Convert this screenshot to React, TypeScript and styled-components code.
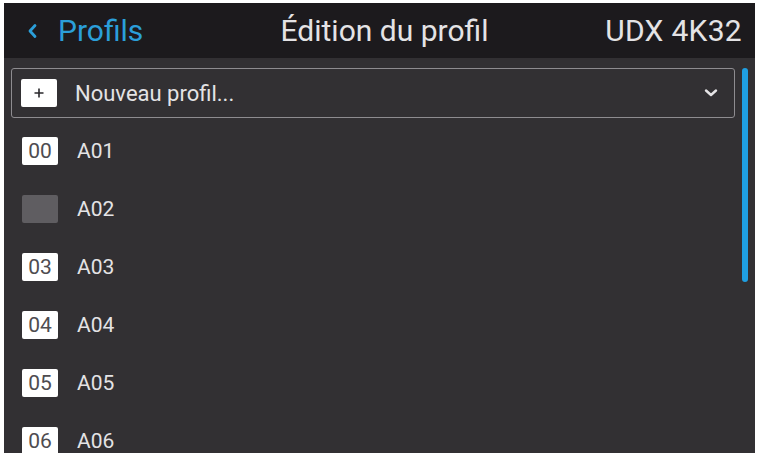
import React, { FC } from 'react';
import styled, { createGlobalStyle } from 'styled-components';

const colors = {
  page: '#ffffff',
  header: '#1c1a1d',
  content: '#323033',
  text: '#e4e3e5',
  blue: '#2b9fd9',
  border: '#8e8c90',
  badgeText: '#4e4c50',
  badgeEmpty: '#5f5d61',
  scroll: '#1f9fe2',
};

const GlobalStyle = createGlobalStyle`
  html, body {
    margin: 0;
    padding: 0;
    background: ${colors.page};
  }
  body {
    font-family: Roboto, "Liberation Sans", sans-serif;
  }
`;

const Screen = styled.div`
  margin: 3px 2px 0 4px;
  height: 450px;
  display: flex;
  flex-direction: column;
  background: ${colors.content};
  overflow: hidden;
`;

const Header = styled.header`
  height: 55px;
  flex: none;
  display: grid;
  grid-template-columns: 1fr auto 1fr;
  align-items: center;
  padding: 0 13px 0 23px;
  background: ${colors.header};
  font-size: 30px;
`;

const BackLink = styled.div`
  display: flex;
  align-items: center;
  gap: 20px;
  color: ${colors.blue};
`;

const Title = styled.div`
  color: ${colors.text};
`;

const Device = styled.div`
  justify-self: end;
  color: ${colors.text};
  letter-spacing: 0.3px;
`;

const Body = styled.div`
  position: relative;
  flex: 1;
  padding: 10px 20px 0 7px;
`;

const ScrollThumb = styled.div`
  position: absolute;
  top: 10px;
  right: 7px;
  width: 6px;
  height: 214px;
  border-radius: 3px;
  background: ${colors.scroll};
`;

const Dropdown = styled.div`
  height: 48px;
  display: flex;
  align-items: center;
  padding: 0 16px 0 9px;
  border: 1px solid ${colors.border};
  border-radius: 3px;
  color: ${colors.text};
  font-size: 22px;
`;

const DropdownLabel = styled.span`
  flex: 1;
  margin-left: 18px;
`;

const Row = styled.div`
  height: 58px;
  display: flex;
  align-items: center;
  padding-left: 11px;
  color: ${colors.text};
  font-size: 21px;
`;

const List = styled.div`
  margin-top: 4px;
`;

const RowLabel = styled.span`
  margin-left: 19px;
`;

const Badge = styled.div<{ $empty?: boolean }>`
  width: 36px;
  height: 28px;
  flex: none;
  display: flex;
  align-items: center;
  justify-content: center;
  border-radius: 2px;
  background: ${({ $empty }) => ($empty ? colors.badgeEmpty : '#ffffff')};
  color: ${colors.badgeText};
  font-size: 21px;
`;

const ChevronLeft: FC = () => (
  <svg width="11" height="16" viewBox="0 0 11 16" fill="none">
    <path d="M8 2.5 L3 8 L8 13.5" stroke={colors.blue} strokeWidth="2.8" strokeLinecap="round" strokeLinejoin="round" />
  </svg>
);

const ChevronDown: FC = () => (
  <svg width="14" height="10" viewBox="0 0 14 10" fill="none">
    <path d="M2 2.5 L7 7 L12 2.5" stroke={colors.text} strokeWidth="2.4" strokeLinecap="round" strokeLinejoin="round" />
  </svg>
);

const PlusIcon: FC = () => (
  <svg width="12" height="12" viewBox="0 0 12 12">
    <path d="M6 1.5 V10.5 M1.5 6 H10.5" stroke="#2a282c" strokeWidth="1.6" />
  </svg>
);

const profiles = [
  { code: '00', name: 'A01' },
  { code: '', name: 'A02' },
  { code: '03', name: 'A03' },
  { code: '04', name: 'A04' },
  { code: '05', name: 'A05' },
  { code: '06', name: 'A06' },
];

const App: FC = () => (
  <>
    <GlobalStyle />
    <Screen>
      <Header>
        <BackLink>
          <ChevronLeft />
          <span>Profils</span>
        </BackLink>
        <Title>Édition du profil</Title>
        <Device>UDX 4K32</Device>
      </Header>
      <Body>
        <Dropdown>
          <Badge>
            <PlusIcon />
          </Badge>
          <DropdownLabel>Nouveau profil...</DropdownLabel>
          <ChevronDown />
        </Dropdown>
        <List>
          {profiles.map((p) => (
            <Row key={p.name}>
              <Badge $empty={!p.code}>{p.code}</Badge>
              <RowLabel>{p.name}</RowLabel>
            </Row>
          ))}
        </List>
        <ScrollThumb />
      </Body>
    </Screen>
  </>
);

export default App;
